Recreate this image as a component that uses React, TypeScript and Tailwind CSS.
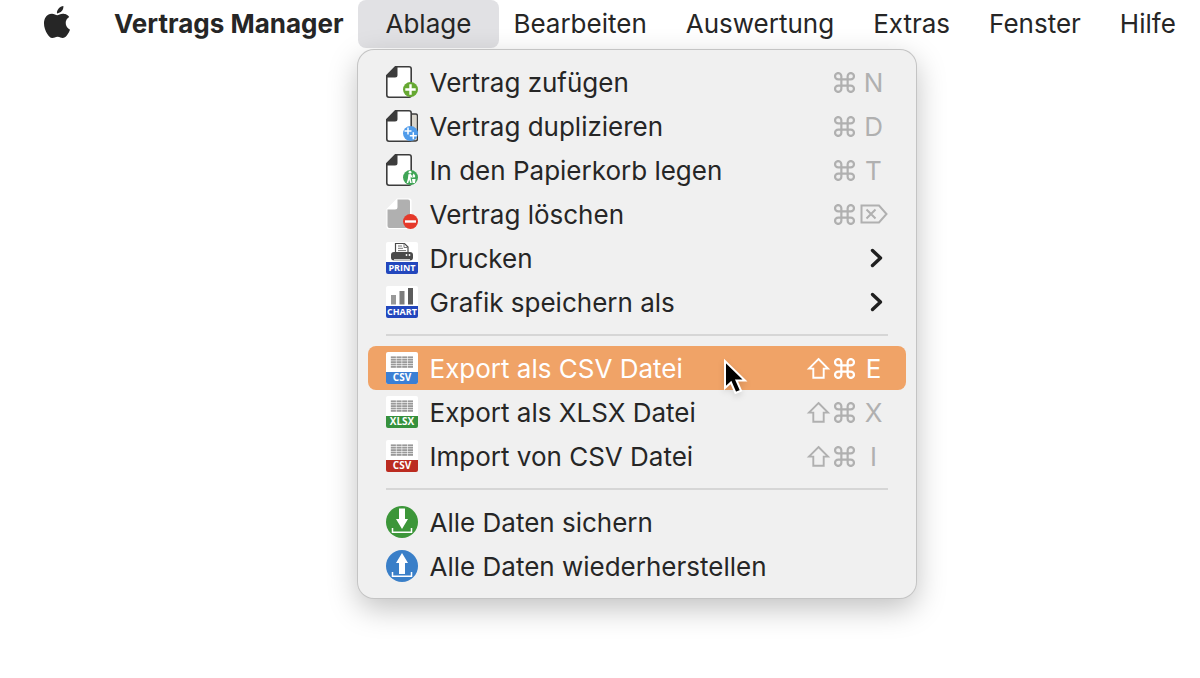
import React from 'react';

type IconName =
  | 'add'
  | 'duplicate'
  | 'trash'
  | 'delete'
  | 'print'
  | 'chart'
  | 'csvExport'
  | 'xlsx'
  | 'csvImport'
  | 'backup'
  | 'restore';

interface MenuEntry {
  label: string;
  icon: IconName;
  shift?: boolean;
  shortcut?: string;
  submenu?: boolean;
  active?: boolean;
}

const groups: MenuEntry[][] = [
  [
    { label: 'Vertrag zufügen', icon: 'add', shortcut: 'N' },
    { label: 'Vertrag duplizieren', icon: 'duplicate', shortcut: 'D' },
    { label: 'In den Papierkorb legen', icon: 'trash', shortcut: 'T' },
    { label: 'Vertrag löschen', icon: 'delete', shortcut: 'del' },
    { label: 'Drucken', icon: 'print', submenu: true },
    { label: 'Grafik speichern als', icon: 'chart', submenu: true },
  ],
  [
    { label: 'Export als CSV Datei', icon: 'csvExport', shift: true, shortcut: 'E', active: true },
    { label: 'Export als XLSX Datei', icon: 'xlsx', shift: true, shortcut: 'X' },
    { label: 'Import von CSV Datei', icon: 'csvImport', shift: true, shortcut: 'I' },
  ],
  [
    { label: 'Alle Daten sichern', icon: 'backup' },
    { label: 'Alle Daten wiederherstellen', icon: 'restore' },
  ],
];

const AppleLogo = () => (
  <svg viewBox="0 0 24 24" className="size-8" fill="#262626" aria-hidden="true">
    <path d="M12.152 6.896c-.948 0-2.415-1.078-3.96-1.04-2.04.027-3.91 1.183-4.961 3.014-2.117 3.675-.546 9.103 1.519 12.09 1.013 1.454 2.208 3.09 3.792 3.039 1.52-.065 2.09-.987 3.935-.987 1.831 0 2.35.987 3.96.948 1.637-.026 2.676-1.48 3.676-2.948 1.156-1.688 1.636-3.325 1.662-3.415-.039-.013-3.182-1.221-3.22-4.857-.026-3.04 2.48-4.494 2.597-4.559-1.429-2.09-3.623-2.324-4.39-2.376-2-.156-3.675 1.09-4.61 1.09zM15.53 3.83c.843-1.012 1.4-2.427 1.245-3.83-1.207.052-2.662.805-3.532 1.818-.78.896-1.454 2.338-1.273 3.714 1.338.104 2.715-.688 3.559-1.701" />
  </svg>
);

// White page with a dark folded corner, shared by the document icons
const Page = () => (
  <>
    <path d="M9.5.8H23a2.2 2.2 0 0 1 2.2 2.2v26a2.2 2.2 0 0 1-2.2 2.2H3A2.2 2.2 0 0 1 .8 29V9.5z" fill="#fff" stroke="#3c3c3c" strokeWidth="1.6" />
    <path d="M11.5.3v8.7a2.5 2.5 0 0 1-2.5 2.5H.2V9.5L9.2.3z" fill="#3c3c3c" />
  </>
);

// Coloured strip with a file type at the foot of an icon
const Tag = ({ color, text, size = 10 }: { color: string; text: string; size?: number }) => (
  <>
    <rect width="32" height="32" rx="2" fill="#fff" />
    <path d="M0 20h32v10a2 2 0 0 1-2 2H2a2 2 0 0 1-2-2z" fill={color} />
    <text x="16" y="29" textAnchor="middle" fontSize={size} fontWeight="700" fontFamily="'Open Sans', sans-serif" fill="#fff">
      {text}
    </text>
  </>
);

const Sheet = () => (
  <g fill="#999">
    {[4.4, 6.8, 9.2, 11.6, 14].map(y => (
      <g key={y}>
        <rect x="4.8" y={y} width="5.1" height="1.8" />
        <rect x="10.5" y={y} width="5.1" height="1.8" />
        <rect x="16.2" y={y} width="5.1" height="1.8" />
        <rect x="21.9" y={y} width="5.1" height="1.8" />
      </g>
    ))}
  </g>
);

const drawings: Record<IconName, React.ReactNode> = {
  add: (
    <>
      <Page />
      <circle cx="24.5" cy="23.5" r="7.5" fill="#66a832" />
      <path d="M24.5 18.3v10.4M19.3 23.5h10.4" stroke="#fff" strokeWidth="2.4" />
    </>
  ),
  duplicate: (
    <>
      <path d="M24 4h5.5a2 2 0 0 1 2 2v23a2 2 0 0 1-2 2H24z" fill="#d9d5cc" stroke="#3c3c3c" strokeWidth="1.4" />
      <Page />
      <circle cx="24.5" cy="23.5" r="7.5" fill="#4f9bea" />
      <path d="M22 17.6v7M18.5 21.1h7M27.3 22.2v7M23.8 25.7h7" stroke="#fff" strokeWidth="1.5" />
    </>
  ),
  trash: (
    <>
      <Page />
      <circle cx="24.5" cy="23.5" r="7.5" fill="#3fa556" />
      <circle cx="24" cy="18.2" r="1.4" fill="#fff" />
      <path d="M22.4 20.2l2.4-.2 2 3.2-.8.7-1.3-1.4v2.2l1 4.3h-1.5l-1-3.3-1 3.3h-1.5l1.2-4.6z" fill="#fff" />
      <path d="M26 25h3.6l-.6 4h-2.4zM26.5 21.5l1.2-2 1.6 2.5-.7 1.6h-1.3z" fill="#fff" />
    </>
  ),
  delete: (
    <>
      <path d="M11 .5h12.5a2 2 0 0 1 2 2V31H2.5a2 2 0 0 1-2-2V11z" fill="#fff" />
      <path d="M11.5 1.5H22a2 2 0 0 1 2 2V30H3.5a2 2 0 0 1-2-2V11.5H9A2.5 2.5 0 0 0 11.5 9z" fill="#b0b0b0" />
      <circle cx="24.5" cy="23.5" r="7.5" fill="#e5392a" />
      <path d="M19 23.5h11" stroke="#fff" strokeWidth="2.4" />
    </>
  ),
  print: (
    <>
      <Tag color="#2347bd" text="PRINT" size={9} />
      <path d="M9.5 11V1.5h9l3.5 3.5v6" fill="#fff" stroke="#4a4a4a" strokeWidth="1.2" />
      <path d="M18 1.5v4h4M12 4h4M12 6.3h5M12 8.6h8" fill="none" stroke="#777" strokeWidth="1" />
      <rect x="5" y="10" width="22" height="8.5" rx="3" fill="#4a4a4a" />
      <path d="M8 17.8h16" stroke="#ddd" strokeWidth="1.4" />
      <circle cx="20.5" cy="13" r=".9" fill="#fff" />
      <circle cx="23.5" cy="13" r=".9" fill="#fff" />
    </>
  ),
  chart: (
    <>
      <Tag color="#2347bd" text="CHART" size={9} />
      <rect x="5" y="9" width="5" height="9.5" fill="#999" />
      <rect x="13.5" y="5" width="5" height="13.5" fill="#7c7c7c" />
      <rect x="22" y="2" width="5" height="16.5" fill="#5c5c5c" />
    </>
  ),
  csvExport: (
    <>
      <Tag color="#3b7fd4" text="CSV" />
      <Sheet />
    </>
  ),
  xlsx: (
    <>
      <Tag color="#36913d" text="XLSX" />
      <Sheet />
    </>
  ),
  csvImport: (
    <>
      <Tag color="#bb2b20" text="CSV" />
      <Sheet />
    </>
  ),
  backup: (
    <>
      <circle cx="16" cy="16" r="16" fill="#3c9639" />
      <path d="M13 2.5h6V13h3l-6 10-6-10h3z" fill="#fff" />
      <path d="M6.5 22v4.3h19V22" fill="none" stroke="#fff" strokeWidth="1.5" />
    </>
  ),
  restore: (
    <>
      <circle cx="16" cy="16" r="16" fill="#3a7fc8" />
      <path d="M13 24h6V13h3L16 3l-6 10h3z" fill="#fff" />
      <path d="M6.5 22v4.3h19V22" fill="none" stroke="#fff" strokeWidth="1.5" />
    </>
  ),
};

const CommandKey = () => (
  <svg viewBox="2 2 20 20" className="size-[21px]" fill="none" stroke="currentColor" strokeWidth="2.1">
    <path d="M15 6v12a3 3 0 1 0 3-3H6a3 3 0 1 0 3 3V6a3 3 0 1 0-3 3h12a3 3 0 1 0-3-3" />
  </svg>
);

const ShiftKey = () => (
  <svg viewBox="0 0 21 21" className="size-[21px] overflow-visible" fill="none" stroke="currentColor" strokeWidth="1.9">
    <path d="M10.5 1 20 10.6H15.7V19.8H5.3V10.6H1z" />
  </svg>
);

const DeleteKey = () => (
  <svg viewBox="0 0 28 20" className="h-5 w-7" fill="none" stroke="currentColor" strokeWidth="2">
    <path d="M1.5 1.5H19L26.500 10 19 18.5H1.5z" />
    <path d="M6.5 5.500l9 9M15.5 5.500l-9 9" />
  </svg>
);

const Chevron = () => (
  <svg viewBox="0 0 24 24" className="size-6" fill="none" stroke="#1f1f1f" strokeWidth="3.4" strokeLinecap="round" strokeLinejoin="round">
    <path d="M8.5 4.5 16.5 12l-8 7.5" />
  </svg>
);

const Pointer = () => (
  <svg viewBox="0 0 26 40" className="absolute left-[355px] top-3 z-10 h-10 w-[26px] drop-shadow-md" aria-hidden="true">
    <path d="M2 3v27l6-5.5L12.500 35l5.500-2.300-4.500-10.200H22z" fill="#000" stroke="#fff" strokeWidth="2" />
  </svg>
);

const MenuItem: React.FC<{ entry: MenuEntry }> = ({ entry }) => (
  <li className="relative">
    <button
      type="button"
      className={`flex h-11 w-full items-center gap-3 rounded-lg px-[18px] text-left ${
        entry.active ? 'bg-[#f0a367] text-white' : 'text-[#262626]'
      }`}
    >
      <svg viewBox="0 0 32 32" className="size-8 shrink-0" aria-hidden="true">
        {drawings[entry.icon]}
      </svg>
      <span className="flex-1 whitespace-nowrap pt-0.5">{entry.label}</span>
      {entry.shortcut && (
        <span className={`flex items-center gap-[5px] ${entry.active ? 'text-white' : 'text-[#b0b0b0]'}`}>
          {entry.shift && <ShiftKey />}
          <CommandKey />
          {entry.shortcut === 'del' ? (
            <DeleteKey />
          ) : (
            <span className="w-7 pt-0.5 text-center">{entry.shortcut}</span>
          )}
        </span>
      )}
      {entry.submenu && <Chevron />}
    </button>
    {entry.active && <Pointer />}
  </li>
);

const App: React.FC = () => {
  return (
    <div className="min-h-screen bg-white font-['Inter',sans-serif] text-[26px] leading-8 text-[#262626]">
      {/* Menu bar */}
      <nav className="flex h-12 items-center whitespace-nowrap pl-[41px]">
        <button type="button" aria-label="Apple" className="pb-1">
          <AppleLogo />
        </button>
        <button type="button" className="ml-[41px] font-bold">Vertrags Manager</button>
        <div className="relative ml-3.5">
          <button type="button" className="h-12 rounded-lg bg-[#e1e1e4] px-7">Ablage</button>

          {/* Open menu */}
          <div className="absolute left-0 top-full mt-0.5 w-[558px] rounded-2xl bg-[#f0f0f0] p-2.5 shadow-[0_0_0_1px_#c4c4c4,0_10px_30px_rgba(0,0,0,0.25)]">
            {groups.map((group, index) => (
              <React.Fragment key={index}>
                {index > 0 && <hr className="mx-[18px] my-2.5 border-t-2 border-[#d6d6d6]" />}
                <ul>
                  {group.map(entry => (
                    <MenuItem key={entry.label} entry={entry} />
                  ))}
                </ul>
              </React.Fragment>
            ))}
          </div>
        </div>
        <div className="ml-3.5 flex gap-[39px]">
          {['Bearbeiten', 'Auswertung', 'Extras', 'Fenster', 'Hilfe'].map(name => (
            <button key={name} type="button">{name}</button>
          ))}
        </div>
      </nav>
    </div>
  );
};

export default App;
